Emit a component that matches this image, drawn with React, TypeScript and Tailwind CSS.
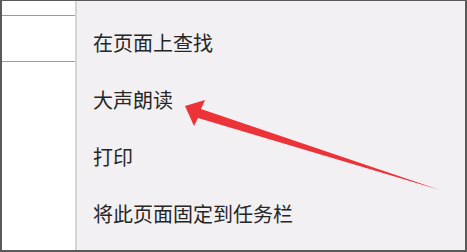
import React from "react";

const items = ["在页面上查找", "大声朗读", "打印", "将此页面固定到任务栏"];

export default function App() {
  return (
    <div className="relative w-[467px] h-[252px] box-border flex border-t border-l-2 border-r-2 border-b-2 border-[#5a5a5a] bg-white overflow-hidden">
      <div className="w-[75px] h-full bg-white border-r-2 border-[#d4d4d4] flex flex-col">
        <div className="mt-[14px] h-px bg-[#72a4d4]" />
        <div className="mt-[45px] h-px bg-[#72a4d4]" />
      </div>
      <div
        className="flex-1 h-full bg-[#f2f0f3] pl-[16px] pt-[13px] flex flex-col text-[20px] text-[#262626]"
        style={{ fontFamily: '"Noto Sans CJK SC", "Noto Sans", sans-serif' }}
      >
        {items.map((t) => (
          <div key={t} className="h-[57px] flex items-center leading-none">
            {t}
          </div>
        ))}
      </div>
      <svg className="absolute left-0 top-0 pointer-events-none" width="467" height="252" viewBox="0 0 467 252">
        <polygon
          points="183,105 203,99 199,108 438,189 196,117 192,125"
          fill="#ec3338"
        />
      </svg>
    </div>
  );
}
